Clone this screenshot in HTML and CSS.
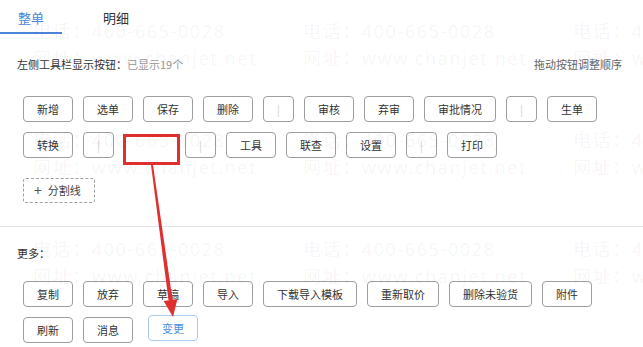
FILE: index.html
```html
<!DOCTYPE html>
<html lang="zh-CN">
<head>
<meta charset="utf-8">
<title>工具栏设置</title>
<link rel="stylesheet" href="styles.css">
</head>
<body>
<div class="page">
  <div class="tabs">
    <div class="tab active">整单</div>
    <div class="tab">明细</div>
  </div>

  <div class="toolbar-head">
    <div class="head-title">左侧工具栏显示按钮：<span class="muted">已显示19个</span></div>
    <div class="head-hint">拖动按钮调整顺序</div>
  </div>

  <div class="btn-area">
    <div class="btn-row">
      <div class="btn">新增</div>
      <div class="btn">选单</div>
      <div class="btn">保存</div>
      <div class="btn">删除</div>
      <div class="btn sep">|</div>
      <div class="btn">审核</div>
      <div class="btn">弃审</div>
      <div class="btn">审批情况</div>
      <div class="btn sep">|</div>
      <div class="btn">生单</div>
    </div>
    <div class="btn-row">
      <div class="btn">转换</div>
      <div class="btn sep">|</div>
      <div class="slot"></div>
      <div class="btn sep">|</div>
      <div class="btn">工具</div>
      <div class="btn">联查</div>
      <div class="btn">设置</div>
      <div class="btn sep">|</div>
      <div class="btn">打印</div>
    </div>
    <div class="add-btn"><span class="plus">+</span>分割线</div>
  </div>

  <div class="divider"></div>

  <div class="more-title">更多：</div>

  <div class="btn-area more-area">
    <div class="btn-row">
      <div class="btn">复制</div>
      <div class="btn">放弃</div>
      <div class="btn">草稿</div>
      <div class="btn">导入</div>
      <div class="btn">下载导入模板</div>
      <div class="btn">重新取价</div>
      <div class="btn">删除未验货</div>
      <div class="btn">附件</div>
    </div>
    <div class="btn-row">
      <div class="btn">刷新</div>
      <div class="btn">消息</div>
      <div class="btn dragging">变更</div>
    </div>
  </div>

  <div class="watermark">
    <div class="wm"><div>电话：400-665-0028</div><div>网址：www.chanjet.net</div></div>
    <div class="wm"><div>电话：400-665-0028</div><div>网址：www.chanjet.net</div></div>
    <div class="wm"><div>电话：400-665-0028</div><div>网址：www.chanjet.net</div></div>
    <div class="wm"><div>电话：400-665-0028</div><div>网址：www.chanjet.net</div></div>
    <div class="wm"><div>电话：400-665-0028</div><div>网址：www.chanjet.net</div></div>
    <div class="wm"><div>电话：400-665-0028</div><div>网址：www.chanjet.net</div></div>
    <div class="wm"><div>电话：400-665-0028</div><div>网址：www.chanjet.net</div></div>
    <div class="wm"><div>电话：400-665-0028</div><div>网址：www.chanjet.net</div></div>
    <div class="wm"><div>电话：400-665-0028</div><div>网址：www.chanjet.net</div></div>
  </div>

  <svg class="annotation" width="643" height="347" viewBox="0 0 643 347">
    <rect x="124.5" y="135.5" width="54" height="28" fill="none" stroke="#e02f2f" stroke-width="3"/>
    <polygon points="151,165.1 153,164.9 172.5,299.7 168.5,300.3" fill="#e02f2f"/>
    <polygon points="163.6,301 177.4,299 173,317" fill="#e02f2f"/>
  </svg>
</div>
</body>
</html>
```

FILE: styles.css
```css
html, body {
  margin: 0;
  padding: 0;
  background: #fff;
}

body {
  font-family: "Noto Sans CJK SC", "Noto Sans", sans-serif;
  color: #333;
}

.page {
  position: relative;
  width: 643px;
  height: 347px;
  overflow: hidden;
}

.tabs {
  display: flex;
  gap: 23px;
}

.tab {
  padding: 9px 18px 6px;
  font-size: 13px;
  line-height: 17px;
  border-bottom: 2px solid transparent;
  color: #333;
}

.tab.active {
  color: #4a86d8;
  border-bottom-color: #4a86d8;
}

.toolbar-head {
  display: flex;
  justify-content: space-between;
  align-items: center;
  margin-top: 22px;
  padding: 0 21px 0 17px;
  font-size: 11px;
  line-height: 16px;
}

.muted {
  color: #999;
}

.head-hint {
  color: #666;
}

.btn-area {
  display: flex;
  flex-direction: column;
  align-items: flex-start;
  gap: 10px;
  margin-top: 24px;
  padding-left: 23px;
}

.btn-row {
  display: flex;
  gap: 10px;
}

.btn {
  box-sizing: border-box;
  height: 26px;
  padding: 0 13px;
  border: 1px solid #9e9e9e;
  border-radius: 4px;
  background: #fff;
  font-size: 11px;
  line-height: 24px;
  color: #333;
  white-space: nowrap;
}

.btn.sep {
  width: 31px;
  padding: 0;
  text-align: center;
  color: #d0d0d0;
}

.slot {
  width: 51px;
  height: 26px;
}

.add-btn {
  box-sizing: border-box;
  margin-top: 10px;
  width: 72px;
  height: 25px;
  border: 1px dashed #a0a0a0;
  border-radius: 3px;
  font-size: 11px;
  line-height: 23px;
  color: #444;
  display: flex;
  align-items: center;
  padding-left: 10px;
}

.plus {
  font-size: 14px;
  margin-right: 6px;
  color: #555;
}

.divider {
  margin-top: 23px;
  border-top: 1px solid #e3e3e3;
}

.more-title {
  margin-top: 18px;
  padding-left: 17px;
  font-size: 11px;
  line-height: 16px;
}

.more-area {
  margin-top: 20px;
}

.btn.dragging {
  border-color: #a9cbef;
  color: #4a8fe0;
  transform: translate(5px, -2px);
}

.watermark {
  position: absolute;
  left: 33px;
  top: 18px;
  display: grid;
  grid-template-columns: repeat(3, 270px);
  grid-auto-rows: 109px;
  pointer-events: none;
}

.wm {
  font-family: "Noto Sans", "Noto Sans CJK SC", sans-serif;
  font-size: 18px;
  line-height: 27px;
  letter-spacing: 1.6px;
  color: rgba(0, 0, 0, 0.055);
  white-space: nowrap;
}

.annotation {
  position: absolute;
  left: 0;
  top: 0;
  pointer-events: none;
}
```
